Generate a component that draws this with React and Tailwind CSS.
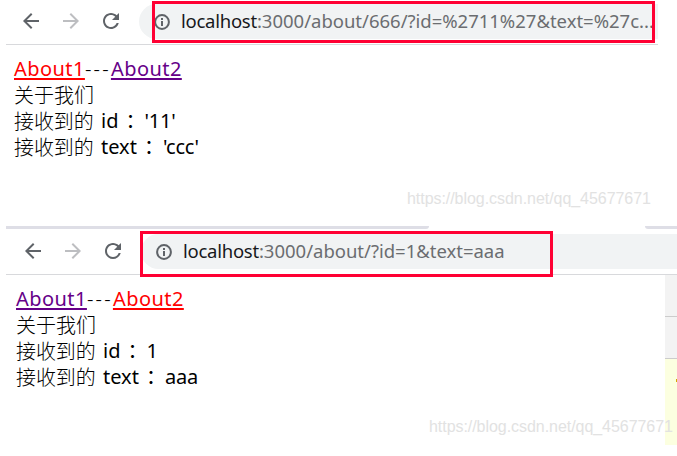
import React from "react";

const latin = "font-['Noto_Sans','Noto_Sans_CJK_SC',sans-serif]";

function NavIcons() {
  return (
    <div className="flex items-center gap-4 text-[#5f6368]">
      <svg className="size-6" viewBox="0 0 24 24" fill="currentColor">
        <path d="M20 11H7.83l5.59-5.59L12 4l-8 8 8 8 1.41-1.41L7.83 13H20v-2z" />
      </svg>
      <svg className="size-6 text-[#bdbec1]" viewBox="0 0 24 24" fill="currentColor">
        <path d="M4 13h12.17l-5.59 5.59L12 20l8-8-8-8-1.41 1.41L16.17 11H4v2z" />
      </svg>
      <svg className="size-6" viewBox="0 0 24 24" fill="currentColor">
        <path d="M17.65 6.35C16.2 4.9 14.21 4 12 4c-4.42 0-7.99 3.58-7.99 8s3.57 8 7.99 8c3.73 0 6.84-2.55 7.73-6h-2.08c-.82 2.33-3.04 4-5.65 4-3.31 0-6-2.69-6-6s2.69-6 6-6c1.66 0 3.14.69 4.22 1.78L13 11h7V4l-2.35 2.35z" />
      </svg>
    </div>
  );
}

function InfoIcon() {
  return (
    <svg className="size-4 shrink-0" viewBox="0 0 16 16" fill="none">
      <circle cx="8" cy="8" r="6.9" stroke="#5f6368" strokeWidth="2" />
      <path d="M7 4h2v2H7zM7 7h2v5H7z" fill="#5f6368" />
    </svg>
  );
}

function Url({ host, rest, className }) {
  return (
    <span className={`whitespace-pre pb-0.5 text-[18.5px] leading-6 tracking-[-0.25px] text-[#6b6d70] ${className}`}>
      <span className="text-[#17181c]">{host}</span>
      <span className="tracking-[-0.01px]">{rest}</span>
    </span>
  );
}

function Row({ name, value }) {
  return (
    <div className="flex h-[26px] whitespace-pre">
      <span className="w-[87px] font-['Noto_Sans_CJK_SC',sans-serif] font-light tracking-[-0.1px]">接收到的</span>
      <span>{name}</span>
      <span className="ml-[7px] w-[19px]">：</span>
      <span className="tracking-[-0.2px]">{value}</span>
    </div>
  );
}

function Content({ first, second, id, text, className }) {
  return (
    <div className={`text-[20px] leading-[26px] text-black ${className}`}>
      <div className="flex h-[26px] whitespace-pre tracking-[0.45px]">
        <a className={`underline decoration-2 underline-offset-2 ${first}`}>About1</a>
        <span className="w-[26px] font-light tracking-[2.2px]">---</span>
        <a className={`underline decoration-2 underline-offset-2 ${second}`}>About2</a>
      </div>
      <div className="h-[26px] font-['Noto_Sans_CJK_SC',sans-serif] font-light">关于我们</div>
      <Row name="id" value={id} />
      <Row name="text" value={text} />
    </div>
  );
}

function Watermark({ className }) {
  return (
    <div className={`absolute whitespace-nowrap font-['Liberation_Sans',sans-serif] text-[16px] leading-5 tracking-[-0.05px] text-[#e2e2e2] ${className}`}>
      https://blog.csdn.net/qq_45677671
    </div>
  );
}

export default function App() {
  return (
    <main className={`relative flex h-[456px] w-[677px] flex-col overflow-hidden bg-white ${latin}`}>
      <section className="relative h-[226px] shrink-0 pl-1.5">
        <header className="flex h-[45px] w-[652px] border-b border-[#d8d9dc] pt-1">
          <div className="flex h-[34px] items-center pl-[13px]"><NavIcons /></div>
          <div className="ml-[16px] flex h-[35px] flex-1 items-center rounded-l-full bg-[#f1f3f4] pl-[15px]">
            <InfoIcon />
            <Url host="localhost" rest=":3000/about/666/?id=%2711%27&text=%27c..." className="ml-[11px]" />
          </div>
        </header>
        <Content first="text-[#ff0000]" second="text-[#660088]" id="'11'" text="'ccc'" className="pl-2 pt-[11px]" />
        <div className="absolute left-[152px] top-px h-[42px] w-[503px] border-3 border-[#ff0033]" />
        <Watermark className="left-[407px] top-[189px]" />
      </section>
      <section className="relative h-[230px] pl-1.5">
        <div className="flex h-[3px] justify-between">
          <div className="w-[423px] rounded-br-[6px] bg-[#dedee6]" />
          <div className="w-8 rounded-bl-[6px] bg-[#dedee6]" />
        </div>
        <header className="flex h-[46px] border-b border-[#d8d9dc] pt-[5px]">
          <div className="flex h-[34px] items-center pl-[15px]"><NavIcons /></div>
          <div className="ml-4 flex h-[35px] flex-1 items-center rounded-l-full bg-[#f1f3f4] pl-[15px]">
            <InfoIcon />
            <Url host="localhost" rest=":3000/about/?id=1&text=aaa" className="ml-[11px]" />
          </div>
        </header>
        <div className="flex">
          <Content first="text-[#660088]" second="text-[#ff0000]" id="1" text="aaa" className="w-[659px] pl-2.5 pt-[11px]" />
          <aside className="flex h-[170px] w-3 flex-col bg-[#f3f3f3]">
            <div className="h-[42px] border-b border-[#cccccc]" />
            <div className="h-[42px] border-b border-[#cccccc]" />
            <div className="flex flex-1 items-start justify-end bg-[#fcffe0] pt-5">
              <div className="h-[3px] w-px bg-[#d5a800]" />
            </div>
          </aside>
        </div>
        <div className="absolute left-[140px] top-[5px] h-[46px] w-[413px] border-3 border-[#ff0033]" />
        <Watermark className="left-[429px] top-[191px]" />
      </section>
    </main>
  );
}
